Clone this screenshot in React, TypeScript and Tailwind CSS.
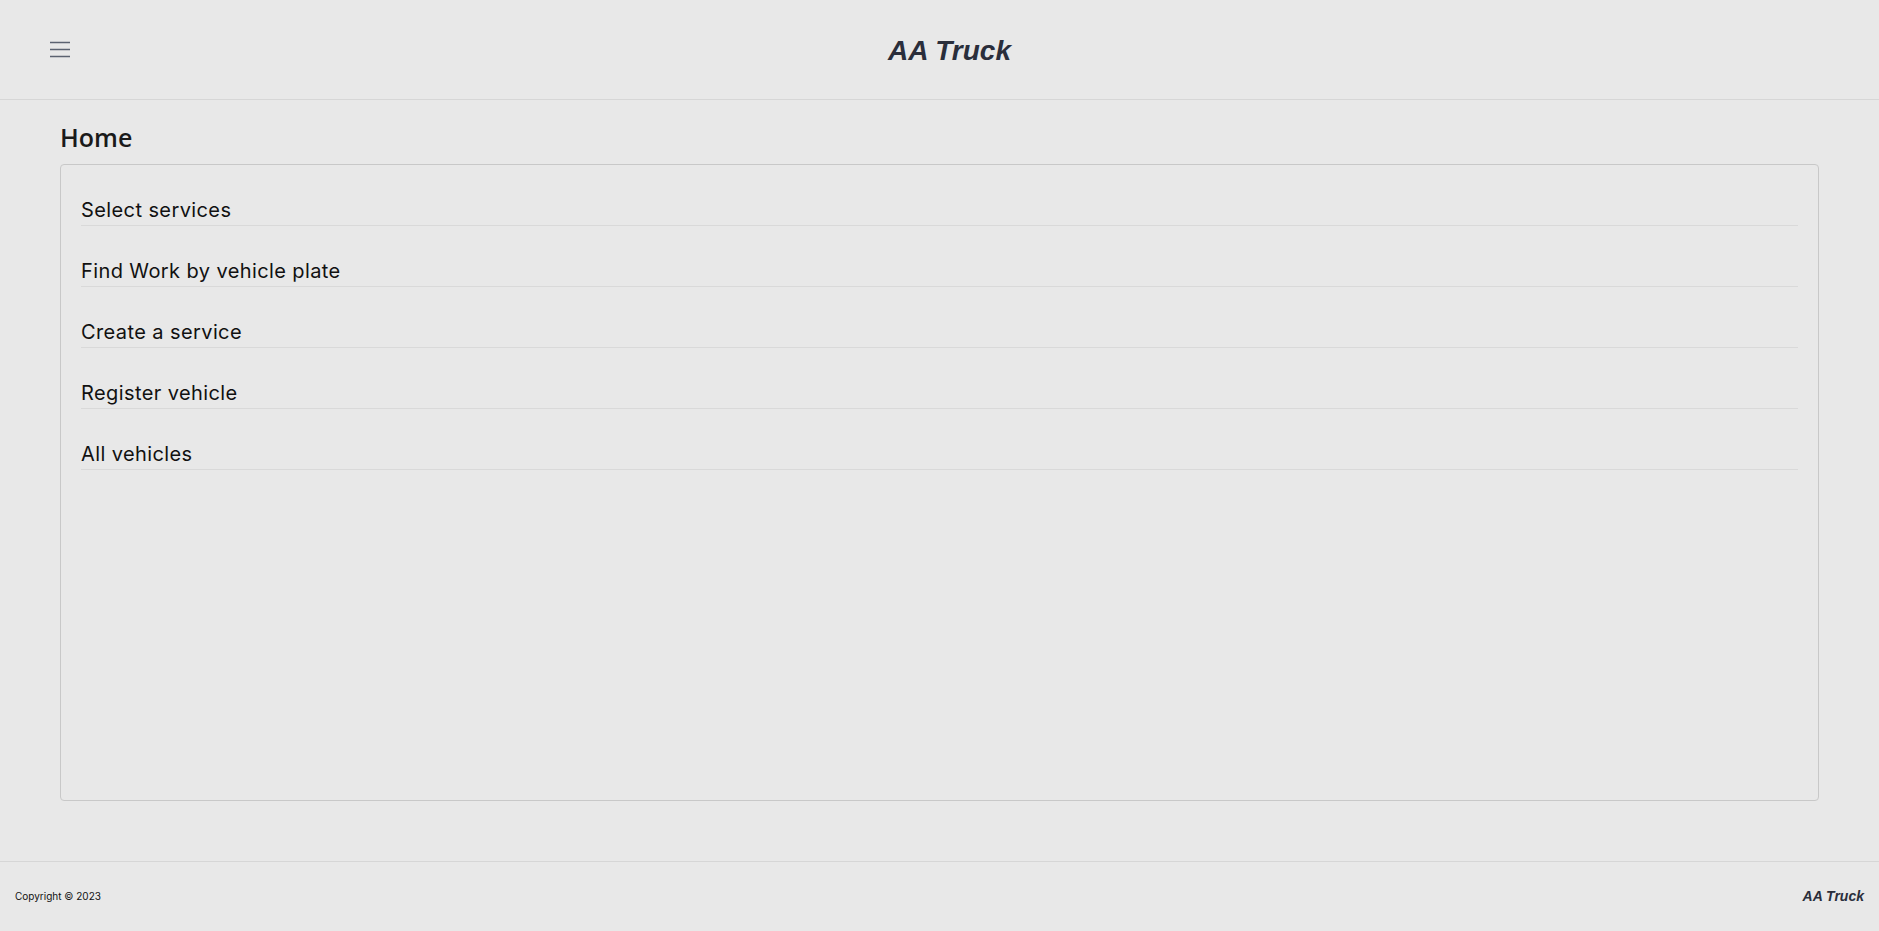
import React from 'react';

const links = [
  'Select services',
  'Find Work by vehicle plate',
  'Create a service',
  'Register vehicle',
  'All vehicles',
];

const App: React.FC = () => {
  return (
    <div className="min-h-screen bg-[#e8e8e8] flex flex-col">
      <header className="h-[100px] border-b border-[#d6d6d6] flex items-center px-[50px]">
        <button className="w-[20px] h-[20px] flex items-center justify-center text-[#5b6270]">
          <svg width="20" height="17" viewBox="0 0 20 17" fill="none" stroke="currentColor" strokeWidth="1.6">
            <path d="M0 1.5h20M0 8.5h20M0 15.5h20" />
          </svg>
        </button>
        <h1 className="flex-1 text-center pt-[3px] text-[28px] font-bold italic text-[#2a2e3b] font-['Liberation_Sans',Arial,sans-serif]">
          AA Truck
        </h1>
      </header>

      <main className="flex-1 flex flex-col px-[60px] pt-[20px] pb-[60px]">
        <h2 className="text-[25px] leading-[34px] font-semibold text-[#1a1a1a] mb-[10px] font-['Open_Sans',sans-serif]">
          Home
        </h2>
        <div className="flex-1 border border-[#c8c8c8] rounded-[4px] px-[20px]">
          {links.map((l) => (
            <div
              key={l}
              className="pt-[31px] pb-[1px] border-b border-[#d9d9d9] text-[20px] leading-[28px] tracking-[0.4px] text-[#111] cursor-pointer font-['Inter',sans-serif]"
            >
              {l}
            </div>
          ))}
        </div>
      </main>

      <footer className="h-[70px] border-t border-[#d6d6d6] flex items-center justify-between px-[15px]">
        <span className="text-[10px] text-[#111] font-['Inter',sans-serif]">Copyright © 2023</span>
        <span className="text-[14px] font-bold italic text-[#2a2e3b] font-['Liberation_Sans',Arial,sans-serif]">
          AA Truck
        </span>
      </footer>
    </div>
  );
};

export default App;
